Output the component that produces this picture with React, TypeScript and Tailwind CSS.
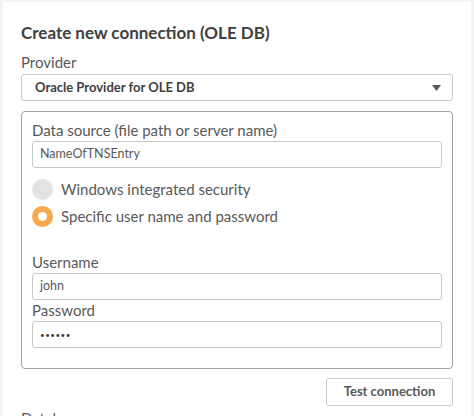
function Field({ label, value, dots }: { label: string; value: string; dots?: boolean }) {
  return (
    <div>
      <p className="text-[15px] leading-[18px] text-[#595959]">{label}</p>
      <div className="mt-[2px] h-[27px] rounded-[3px] border border-[#c8c8c8] bg-white px-[7px] flex items-center text-[#595959]">
        {dots ? (
          <span className="text-[8px] tracking-[0.5px] text-[#404040]">{value}</span>
        ) : (
          <span className="text-[12.5px]">{value}</span>
        )}
      </div>
    </div>
  );
}

function Radio({ checked, label }: { checked?: boolean; label: string }) {
  return (
    <div className="flex items-center gap-[8px] h-[27px]">
      {checked ? (
        <span className="w-[21px] h-[21px] rounded-full bg-[#f6a94a] flex items-center justify-center">
          <span className="w-[9px] h-[9px] rounded-full bg-white" />
        </span>
      ) : (
        <span className="w-[21px] h-[21px] rounded-full bg-[#e3e3e3]" />
      )}
      <span className="text-[15px] text-[#595959]">{label}</span>
    </div>
  );
}

export default function App() {
  return (
    <div className="w-[474px] h-[416px] overflow-hidden bg-[#f3f3f3] pt-[2px] px-[3px]" style={{ fontFamily: 'Lato, "Noto Sans", sans-serif' }}>
      <div className="bg-white h-[460px] px-[18px] pt-[20px]">
        <h1 className="text-[17px] leading-[22px] font-bold text-[#404040]">Create new connection (OLE DB)</h1>

        {/* Provider */}
        <p className="mt-[9px] text-[15px] leading-[18px] text-[#595959]">Provider</p>
        <div className="mt-[3px] h-[27px] rounded-[3px] border border-[#c8c8c8] bg-white pl-[13px] pr-[11px] flex items-center justify-between">
          <span className="text-[13px] font-bold text-[#404040]">Oracle Provider for OLE DB</span>
          <svg width="9" height="6" viewBox="0 0 9 6"><path d="M0 0h9L4.5 6z" fill="#595959" /></svg>
        </div>

        {/* Connection settings group */}
        <div className="mt-[10px] h-[258px] rounded-[4px] border border-[#a0a0a0] px-[10px] pt-[9px]">
          <Field label="Data source (file path or server name)" value="NameOfTNSEntry" />
          <div className="mt-[8px]">
            <Radio label="Windows integrated security" />
            <Radio checked label="Specific user name and password" />
          </div>
          <div className="mt-[23px]">
            <Field label="Username" value="john" />
          </div>
          <div className="mt-[1px]">
            <Field label="Password" value="••••••" dots />
          </div>
        </div>

        <div className="mt-[9px] flex justify-end">
          <button className="h-[28px] w-[127px] rounded-[3px] border border-[#c8c8c8] bg-white text-[13px] font-bold text-[#595959]">
            Test connection
          </button>
        </div>
        <p className="mt-[1px] text-[15px] text-[#595959]">Database</p>
      </div>
    </div>
  );
}
